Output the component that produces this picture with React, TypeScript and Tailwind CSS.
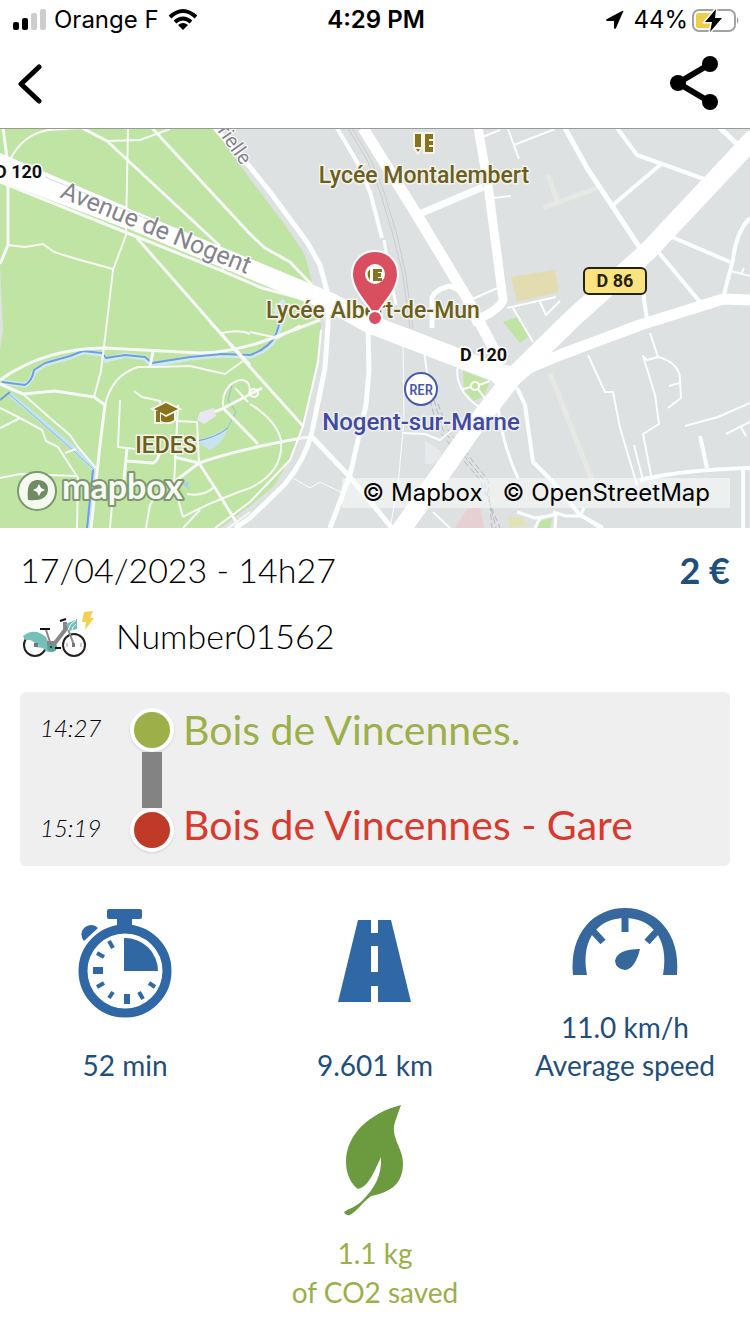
import React from "react";

type Road = { d: string; w: number };

const parkPaths: Road[] = [
  { d: "M3 128 L8 165 L8 245 L0 264", w: 3 },
  { d: "M10 160 Q22 135 48 130 L82 128 L107 141 L140 140 L170 129", w: 2 },
  { d: "M82 128 L107 141 L220 246", w: 3 },
  { d: "M128 128 L126 235 L113 270 L106 330 L101 371 L94 397 L105 405", w: 2 },
  { d: "M152 128 L250 234 L265 248 L290 262 L312 285", w: 3 },
  { d: "M0 182 L125 232 L220 270 L262 288 L330 306", w: 3 },
  { d: "M137 238 L216 328 L250 367 L303 426", w: 3 },
  { d: "M8 245 L25 247 L43 244 L54 252 L80 260 L113 269", w: 2 },
  { d: "M225 262 L222 271", w: 2 },
  { d: "M0 380 Q45 348 105 348 L200 353 Q235 352 270 339 L320 320", w: 3 },
  { d: "M0 384 L23 394 L55 391 L94 397 L105 405 L100 445 L91 528", w: 3 },
  { d: "M105 405 Q112 375 138 367 L155 367 L190 366 L225 374 L243 361", w: 2 },
  { d: "M153 352 L150 366", w: 3 },
  { d: "M210 322 L250 365", w: 3 },
  { d: "M222 333 Q240 329 250 334", w: 2 },
  { d: "M23 394 L50 418 L70 435 L78 447 L96 468", w: 2 },
  { d: "M0 408 L20 418 L42 430 L46 441 L58 447 L78 478 L77 528", w: 2 },
  { d: "M0 428 L20 418", w: 2 },
  { d: "M0 478 L20 474 L76 476", w: 2 },
  { d: "M65 453 L76 449", w: 2 },
  { d: "M120 400 L118 447 L135 449", w: 2 },
  { d: "M134 391 L142 397 L160 401 L162 415", w: 2 },
  { d: "M127 448 L124 480", w: 3 },
  { d: "M127 461 L153 463 Q158 462 160 450", w: 3 },
  { d: "M178 405 L174 485 L183 517", w: 2 },
  { d: "M176 421 L197 422 L199 463", w: 2 },
  { d: "M211 413 L222 409 L262 388", w: 3 },
  { d: "M224 409 Q220 396 230 385 Q242 376 248 383 Q251 388 249 393", w: 2 },
  { d: "M224 409 L258 444", w: 3 },
  { d: "M174 457 L199 463 Q235 450 302 438 L312 437", w: 3 },
  { d: "M199 463 L170 485 M199 463 L215 488 L240 528", w: 3 },
  { d: "M215 486 Q205 497 187 494", w: 2 },
  { d: "M146 528 L150 505 Q160 485 170 480", w: 2 },
  { d: "M110 528 L112 505", w: 2 },
  { d: "M183 517 Q210 502 250 488 Q284 472 281 440 Q276 420 250 404", w: 2 },
  { d: "M183 528 L200 510 M228 528 L250 512", w: 2 },
  { d: "M235 388 L248 402", w: 2 },
  { d: "M250 332 L278 338 L300 325", w: 2 },
];

const streets: Road[] = [
  { d: "M337 128 L357 162 L370 192 L382 238", w: 4 },
  { d: "M384 240 L390 275 L396 305", w: 3 },
  { d: "M215 128 L250 167 L270 192 L307 242 L320 265 L328 295 L328 325 L325 368 L312 432 Q305 460 285 484 L250 518 L235 528", w: 5 },
  { d: "M321 330 L318 362 L303 426 L290 460 L250 502 L215 528", w: 2 },
  { d: "M368 325 L369 370 L366 405 L350 475 L330 528", w: 5 },
  { d: "M312 437 L350 477 L392 528", w: 5 },
  { d: "M403 343 L404 420 L398 485 L390 528", w: 1 },
  { d: "M293 478 L310 488 L320 482 L345 494", w: 1 },
  { d: "M424 350 L430 395 M403 433 L425 434 L440 440 L452 430", w: 2 },
  { d: "M463 370 Q455 360 458 380 Q464 400 485 410", w: 2 },
  { d: "M417 215 L483 187", w: 7 },
  { d: "M432 328 L432 298 Q434 290 450 286 L462 292", w: 5 },
  { d: "M470 300 L500 287", w: 2 },
  { d: "M480 138 L500 130 M508 129 L519 159 M514 145 L555 129", w: 2 },
  { d: "M485 199 L511 196", w: 2 },
  { d: "M565 128 L587 168 L640 248", w: 5 },
  { d: "M655 248 L700 302", w: 4 },
  { d: "M665 234 L730 262", w: 4 },
  { d: "M613 205 L660 165", w: 4 },
  { d: "M617 128 L637 155 L707 180", w: 4 },
  { d: "M720 128 L740 147", w: 5 },
  { d: "M750 218 Q736 232 733 260 L723 298", w: 4 },
  { d: "M731 271 L750 276 M741 274 L744 268", w: 2 },
  { d: "M643 258 L644 300 L648 325", w: 4 },
  { d: "M507 308 L556 297 M513 308 L533 342 M540 302 L546 315 L560 301", w: 2 },
  { d: "M517 388 L525 405 L533 462 L553 482 L580 515 L603 528", w: 4 },
  { d: "M497 395 Q500 440 518 478", w: 3 },
  { d: "M588 355 L605 392 L613 392 L620 428 L637 485", w: 2 },
  { d: "M650 333 L658 357 Q680 363 680 380 L681 398 L668 408", w: 2 },
  { d: "M658 357 L647 360 L643 356 L655 395 L659 424 L643 434 L652 480", w: 2 },
  { d: "M669 386 L679 383 M634 445 L643 480", w: 2 },
  { d: "M685 426 L718 417 L750 403", w: 2 },
  { d: "M700 436 L707 468", w: 4 },
  { d: "M640 480 Q680 470 750 468", w: 4 },
  { d: "M743 470 L743 528", w: 4 },
  { d: "M726 434 L750 422 M741 427 L746 436", w: 2 },
  { d: "M517 512 L535 518 L555 515 M535 528 L540 518 L556 514 L555 528 M580 516 L584 508", w: 3 },
  { d: "M553 512 L566 516 L582 516 L600 528", w: 3 },
  { d: "M433 512 L450 528", w: 2 },
];

const avenues: Road[] = [
  { d: "M0 167 L127 218 L250 269 L330 302 L370 324 L500 374", w: 19 },
  { d: "M363 128 L417 215 L467 298 L502 365", w: 11 },
  { d: "M478 128 L488 185 L503 300 Q500 310 472 322", w: 9 },
  { d: "M755 137 L647 252 L573 318 L512 378 L470 432 L397 536", w: 19 },
  { d: "M505 378 L560 355 L640 325 L723 299 L750 300", w: 11 },
];

function Roads({ items, className }: { items: Road[]; className: string }) {
  return (
    <g fill="none" className={className} strokeLinejoin="round">
      {items.map((r) => (
        <path key={r.d} d={r.d} strokeWidth={r.w} />
      ))}
    </g>
  );
}

function MapDrawing() {
  return (
    <svg
      viewBox="0 128 750 400"
      preserveAspectRatio="xMidYMid slice"
      className="block h-[400px] w-full"
      role="img"
      aria-label="Map of Nogent-sur-Marne"
    >
      <defs>
        <path id="avenue" d="M59 197 L256 278" />
        <path id="rielle" d="M217 131 L260 192" />
      </defs>
      <rect y="128" width="750" height="400" fill="#dde1e1" />
      <path
        d="M0 128 H214 L250 179 L285 225 L305 255 L314 290 L321 325 L319 360 L303 425 L294 452 L274 486 L250 506 L220 528 H0 Z"
        fill="#bfe4a4"
      />
      <path d="M0 265 L3 330 L0 350 Z" fill="#dde1e1" />
      <path d="M511 277 L555 270 L559 292 L517 302 Z" fill="#e2dcb0" />
      <path d="M503 322 L518 317 L529 336 L520 343 Z" fill="#bfe4a4" />
      <path d="M463 371 L490 381 L484 396 L474 401 L464 390 Z" fill="#bfe4a4" />
      <path d="M455 528 L468 508 H480 L484 528 Z" fill="#e8cfd3" />
      <path d="M507 517 L520 517 L528 525 L510 528 Z" fill="#e2e2b4" />
      <path d="M537 528 L540 521 L552 518 L550 528 Z" fill="#bfe4a4" />
      <path d="M425 441 L440 450 L443 463 L425 464 Z" fill="#e8e9ed" />
      <g fill="none" stroke="#e7e8e4" strokeWidth="5">
        <path d="M543 208 L597 188 M548 175 L558 203 M550 373 L592 480" />
      </g>

      <g fill="none" strokeLinejoin="round">
        <path
          d="M2 382 L25 385 Q32 381 34 372 L45 364 L70 357 L83 352 L102 354 L106 360 L125 355 L145 358 L152 365 L190 358 L222 355 L250 356 Q270 350 276 336 L282 322 L276 310 L284 300"
          stroke="#cfe8f2"
          strokeWidth="5"
        />
        <path
          d="M2 382 L25 385 Q32 381 34 370 L45 363 L70 356 L83 351 L102 353 L106 358 L125 355 L145 357 L152 363 L190 357 L222 354 L250 355 Q270 348 276 334 L280 322"
          stroke="#6f9fd8"
          strokeWidth="2"
        />
        <path d="M8 393 L38 418 L75 450 L95 470 L88 528" stroke="#c2e2ee" strokeWidth="5" />
        <path d="M8 393 L75 452 L94 470" stroke="#8dbfd0" strokeWidth="1" />
        <path d="M93 470 L87 528 M0 400 L10 392" stroke="#6f9fd8" strokeWidth="2" />
        <path d="M232 386 L228 400 L236 412 L228 427" stroke="#8fc0df" strokeWidth="1" />
      </g>
      <path d="M197 442 L228 428 Q222 445 210 450 Z" fill="#c8e3ee" />
      <path d="M197 441 Q215 438 228 428" stroke="#6f9fd8" fill="none" strokeWidth="1" />
      <path d="M182 483 L188 482 L189 490 Z" fill="#a9d0e8" />

      <Roads items={parkPaths} className="stroke-[#f7f8f8]" />
      <path d="M200 412 L214 408 L216 416 L204 424 L197 420 Z" fill="#e8e6f0" />
      <g fill="none" stroke="#c9cdcd" strokeWidth="1">
        <path d="M348 128 L367 160 L380 192 L393 235 L403 275 L410 328" />
        <path d="M352 128 L371 160 L384 192 L397 235 L406 275 L413 328" />
      </g>
      <g fill="none" stroke="#b4babc" strokeWidth="1" strokeDasharray="6 3">
        <path d="M430 400 L438 430 L480 480 L500 528" />
        <path d="M434 400 L443 430 L484 480 L496 528" />
        <path d="M438 404 L448 430 L488 480 L492 528" />
      </g>
      <Roads items={streets} className="stroke-[#fdfefe]" />
      <Roads items={avenues} className="stroke-white" />
      <path d="M0 153 L127 207 V229 L0 181 Z" fill="#fff" />
      <path d="M45 177 L150 220" stroke="#d5dae0" fill="none" strokeWidth="1" />
      <path d="M490 362 L512 366 L530 362 L538 368 L508 392 L492 382 Z" fill="#fff" />
      <g fill="none" stroke="#fff" strokeWidth="2">
        <circle cx="475" cy="386" r="4" />
        <path d="M463 389 L471 387 M479 385 L490 381 M478 389 L486 400" />
        <circle cx="254" cy="393" r="4" />
      </g>

      <g className="[font-family:Roboto,sans-serif] font-normal" fill="#84848a" stroke="#ffffff" strokeWidth="2" paintOrder="stroke">
        <text className="text-[25px]">
          <textPath href="#avenue">Avenue de Nogent</textPath>
        </text>
        <text className="text-[20px]">
          <textPath href="#rielle">rielle</textPath>
        </text>
      </g>

      <g
        className="[font-family:Roboto,sans-serif] text-[23px] font-medium"
        fill="#6b5f20"
        stroke="#f4f3ec"
        strokeWidth="3"
        paintOrder="stroke"
        textAnchor="middle"
      >
        <text x="424" y="183">Lycée Montalembert</text>
        <text x="373" y="318">Lycée Albert-de-Mun</text>
        <text x="166" y="453">IEDES</text>
      </g>
      <text
        x="421"
        y="430"
        className="[font-family:Roboto,sans-serif] text-[24px] font-medium"
        fill="#4249a0"
        stroke="#eff0f6"
        strokeWidth="3"
        paintOrder="stroke"
        textAnchor="middle"
      >
        Nogent-sur-Marne
      </text>
      <g className="[font-family:Roboto,sans-serif] text-[18px] font-bold" fill="#111" stroke="#fff" strokeWidth="3" paintOrder="stroke">
        <text x="-5" y="178">D 120</text>
        <text x="460" y="361">D 120</text>
      </g>
      <rect x="584" y="268" width="62" height="26" rx="5" fill="#fbe380" stroke="#262210" strokeWidth="2" />
      <text x="615" y="287" textAnchor="middle" className="[font-family:Roboto,sans-serif] text-[18px] font-bold" fill="#262210">
        D 86
      </text>

      <g stroke="#f6f4e8" strokeWidth="4" paintOrder="stroke" fill="#87741e">
        <path d="M415 134 H421 V147 H415 Z M416 149 H420 L418 152 Z" />
        <path d="M425 134 H433 V139 H429 V141 H433 V145 H429 V147 H433 V152 H425 Z" />
        <path d="M166 403 L178 409 L166 415 L154 409 Z M161 414 L166 417 L174 413 V420 Q168 424 161 421 Z M156 411 H160 V422 H156 Z" />
      </g>

      <circle cx="421" cy="389" r="16" fill="#fff" stroke="#4a59b0" strokeWidth="2" />
      <text x="421" y="395" textAnchor="middle" className="[font-family:'Roboto_Condensed',Roboto,sans-serif] text-[15px] font-medium" fill="#4a59b0">
        RER
      </text>

      <path
        d="M375 251 C362 251 352 261 352 274 C352 289 365 301 371 311 Q375 314 379 311 C385 301 398 289 398 274 C398 261 388 251 375 251 Z"
        fill="#da4f5f"
        stroke="#fff"
        strokeWidth="2"
      />
      <circle cx="375" cy="274" r="10" fill="#fff" />
      <path d="M370 269 Q365 274 370 280 Z M373 269 H382 V272 H378 V273 H381 V277 H378 V278 H382 V281 H373 Z" fill="#87741e" />
      <circle cx="375" cy="318" r="7" fill="#da4f5f" stroke="#fff" strokeWidth="2" />

      <circle cx="37" cy="491" r="19" fill="#f4faf0" stroke="#7d976f" strokeWidth="2" />
      <path d="M28 500 C27 489 28 480 38 480 C44 480 48 484 48 489 C48 499 39 501 28 500 Z" fill="#6f8c62" />
      <path d="M39 484 L41 488 L45 490 L41 492 L39 496 L37 492 L33 490 L37 488 Z" fill="#fff" />
      <text
        x="62"
        y="499"
        className="[font-family:Lato,sans-serif] text-[34px] font-bold"
        fill="#f7fbf4"
        stroke="#7d976f"
        strokeWidth="4"
        paintOrder="stroke"
        strokeLinejoin="round"
      >
        mapbox
      </text>
    </svg>
  );
}

function StatusBar() {
  return (
    <div className="grid h-10 grid-cols-3 items-center pr-[10px] pl-3 [font-family:Inter,sans-serif] text-[24px] leading-none text-black">
      <div className="flex items-center gap-2">
        <svg className="h-6 w-[34px]" viewBox="0 0 34 24" aria-hidden="true">
          <rect x="1" y="14" width="6" height="8" rx="2" />
          <rect x="10" y="10" width="6" height="12" rx="2" />
          <rect x="19" y="5" width="6" height="17" rx="2" fill="#cdcdcd" />
          <rect x="28" y="1" width="6" height="21" rx="2" fill="#cdcdcd" />
        </svg>
        <span className="whitespace-nowrap">Orange F</span>
        <svg className="h-6 w-8" viewBox="0 0 32 24" aria-hidden="true">
          <g fill="none" stroke="#000" strokeWidth="4">
            <path d="M3 9 Q16 -3 29 9" />
            <path d="M8 14 Q16 7 24 14" />
          </g>
          <path d="M11 17 Q16 13 21 17 L16 22 Z" />
        </svg>
      </div>
      <div className="text-center font-semibold">4:29 PM</div>
      <div className="flex items-center justify-end gap-[2px]">
        <svg className="mr-[6px] h-5 w-5" viewBox="0 0 20 20" aria-hidden="true">
          <path d="M18 2 L11 18 Q10 20 9 18 V11 H2 Q0 10 2 9 L17 1 Q19 0 18 2 Z" />
        </svg>
        <span>44%</span>
        <svg className="h-7 w-[50px]" viewBox="0 0 50 28" aria-hidden="true">
          <rect x="3" y="4" width="42" height="21" rx="6" fill="#fff" stroke="#a2a2a2" strokeWidth="2" />
          <path d="M8 7 H22 V22 H8 Q6 22 6 20 V9 Q6 7 8 7 Z" fill="#f0cc4b" />
          <path d="M47 11 Q50 14 47 18 Z" fill="#a2a2a2" />
          <path d="M26 3 L15 16 H22 L20 26 L32 12 H25 Z" stroke="#fff" strokeWidth="3" paintOrder="stroke" />
        </svg>
      </div>
    </div>
  );
}

function Bike() {
  return (
    <svg className="h-[52px] w-[74px] shrink-0" viewBox="0 0 74 52" role="img" aria-label="Electric bike">
      <g fill="none" stroke="#222" strokeWidth="2">
        <circle cx="13" cy="35" r="11" />
        <circle cx="52" cy="35" r="11" />
      </g>
      <path d="M1 26 Q12 17 24 27 L28 35 H15 Q10 29 3 30 Z" fill="#74bfb8" />
      <path d="M12 36 L26 34 L30 41 Q26 44 21 38 L13 37 Z" fill="#74bfb8" />
      <circle cx="30" cy="37" r="5" fill="#57a49e" />
      <circle cx="29" cy="37" r="1" fill="#222" />
      <g fill="none" stroke="#878787">
        <path d="M24 20 L28 32 M44 14 L52 35" strokeWidth="2" />
        <path d="M25 33 H33 L43 20 V12" strokeWidth="4" />
      </g>
      <path d="M18 19 H28 M38 11 L44 9 M33 38 H39" stroke="#111" strokeWidth="2" fill="none" />
      <path d="M44 14 L55 9 V19 L47 21 Z" fill="#74bfb8" />
      <path d="M46 20 Q47 14 54 10 M50 20 Q50 17 54 14" stroke="#fff" strokeWidth="1" fill="none" />
      <path d="M12 35 H16 M50 35 H53" stroke="#777" strokeWidth="4" />
      <path d="M45 33 V37 M59 33 V37" stroke="#c88" strokeWidth="1" />
      <path d="M62 2 L71 1 L68 8 H72 L63 20 L64 12 H60 Z" fill="#f3d14d" />
    </svg>
  );
}

function Stopwatch() {
  return (
    <svg className="h-[110px] w-24" viewBox="78 908 96 110" fill="#2f68a5" aria-hidden="true">
      <rect x="108" y="909" width="35" height="10" rx="2" />
      <rect x="118" y="916" width="15" height="14" />
      <path d="M85 941 A9 9 0 0 1 99 928 Z" />
      <circle cx="126" cy="971" r="42" fill="#fff" stroke="#2f68a5" strokeWidth="9" />
      <path d="M125 938 A33 33 0 0 1 159 971 H125 Z" />
      <path d="M94 967 H104 V974 H94 Z M125 994 H131 V1004 H125 Z" />
      <path
        d="M110 941 L114 948 M98 953 L105 957 M98 987 L105 983 M110 998 L114 992 M140 992 L144 999 M150 983 L156 987"
        stroke="#2f68a5"
        strokeWidth="4"
      />
    </svg>
  );
}

function RoadIcon() {
  return (
    <svg className="h-[110px] w-24" viewBox="327 908 96 110" fill="#2f68a5" aria-hidden="true">
      <path d="M358 920 H391 L411 1002 H338 Z" />
      <path d="M371 920 H378 V933 H371 Z M371 946 H378 V972 H371 Z M371 986 H378 V1002 H371 Z" fill="#fff" />
    </svg>
  );
}

function Gauge() {
  return (
    <svg className="h-[72px] w-28" viewBox="569 908 112 72" aria-hidden="true">
      <path
        d="M573 975 C569 932 595 908 625 908 C655 908 681 932 677 975 H663 C670 937 650 918 625 918 C600 918 580 937 587 975 Z"
        fill="#36689d"
      />
      <path d="M625 914 V932 M592 930 L603 942 M658 930 L647 942" stroke="#36689d" strokeWidth="7" />
      <path d="M640 949 Q635 969 625 970 Q616 969 615 961 Q617 949 640 949 Z" fill="#36689d" />
    </svg>
  );
}

function Leaf() {
  return (
    <svg className="h-[112px] w-[62px]" viewBox="344 1104 62 112" fill="#6c9b3f" aria-hidden="true">
      <path d="M401 1105 C370 1113 346 1134 346 1162 C346 1175 352 1185 358 1189 C367 1187 372 1177 381 1157 C382 1175 375 1188 362 1201 C356 1207 348 1209 344 1212 Q346 1216 350 1215 C356 1212 363 1202 371 1196 C392 1192 403 1183 403 1163 C403 1148 390 1137 395 1122 Z" />
    </svg>
  );
}

function Stop({ color }: { color: string }) {
  return <span className={`size-11 rounded-full border-4 border-white shadow-sm ${color}`} />;
}

export default function App() {
  return (
    <main className="min-h-screen w-full bg-white [font-family:Lato,sans-serif] text-black">
      <StatusBar />
      <nav className="flex h-[88px] items-center justify-between px-4">
        <button type="button" aria-label="Back" className="flex size-12 items-center">
          <svg className="h-10 w-7" viewBox="0 0 28 40" fill="none" aria-hidden="true">
            <path d="M23 3 L5 20 L23 37" stroke="#000" strokeWidth="5" strokeLinecap="round" strokeLinejoin="round" />
          </svg>
        </button>
        <button type="button" aria-label="Share" className="mr-[14px] flex h-14 w-[52px] items-center">
          <svg className="h-14 w-[52px]" viewBox="668 55 52 56" aria-hidden="true">
            <circle cx="678" cy="82" r="8" />
            <circle cx="710" cy="63" r="8" />
            <circle cx="710" cy="101" r="8" />
            <path d="M710 63 L678 82 L710 101" stroke="#000" strokeWidth="6" fill="none" />
          </svg>
        </button>
      </nav>

      <section className="relative overflow-hidden">
        <MapDrawing />
        <div className="absolute inset-x-0 top-0 h-px bg-[#999999]" />
        <div className="absolute right-5 bottom-5 flex h-[30px] items-center gap-5 bg-white/50 px-5 [font-family:Inter,sans-serif] text-[24px] leading-none text-black">
          <a href="#mapbox">© Mapbox</a>
          <a href="#openstreetmap">© OpenStreetMap</a>
        </div>
      </section>

      <section className="px-5 pt-5">
        <div className="flex items-center justify-between leading-[44px]">
          <h1 className="text-[34px] font-light">17/04/2023 - 14h27</h1>
          <p className="text-[36px] font-bold text-[#1f4f7c]">2 €</p>
        </div>
        <div className="mt-[18px] flex items-center gap-5 pl-[2px]">
          <Bike />
          <p className="text-[34px] leading-[52px] font-light">Number01562</p>
        </div>
      </section>

      <section className="mx-5 mt-[30px] flex rounded-md bg-[#efefef] px-5 pt-4 pb-[14px]">
        <div className="flex w-[90px] flex-col justify-between pb-1 text-[24px] leading-[40px] font-light italic">
          <time>14:27</time>
          <time>15:19</time>
        </div>
        <div className="flex w-11 flex-col items-center">
          <Stop color="bg-[#9caf49]" />
          <span className="h-14 w-5 bg-[#838383]" />
          <Stop color="bg-[#c03a28]" />
        </div>
        <div className="flex flex-1 flex-col gap-[51px] pl-[9px] text-[41px] leading-[44px]">
          <p className="text-[#9caf49]">Bois de Vincennes.</p>
          <p className="text-[#d93a2e]">Bois de Vincennes - Gare</p>
        </div>
      </section>

      <section className="mt-[42px] grid grid-cols-3 text-center text-[28px] leading-[38px] text-[#1f4f7c]">
        <div className="flex flex-col items-center justify-between">
          <Stopwatch />
          <p>52 min</p>
        </div>
        <div className="flex flex-col items-center justify-between">
          <RoadIcon />
          <p>9.601 km</p>
        </div>
        <div className="flex flex-col items-center">
          <Gauge />
          <p className="mt-7">
            11.0 km/h
            <br />
            Average speed
          </p>
        </div>
      </section>

      <section className="mt-5 flex flex-col items-center pb-5 text-center text-[28px] leading-[39px] text-[#9caf49]">
        <Leaf />
        <p className="mt-[18px]">
          1.1 kg
          <br />
          of CO2 saved
        </p>
      </section>
    </main>
  );
}
